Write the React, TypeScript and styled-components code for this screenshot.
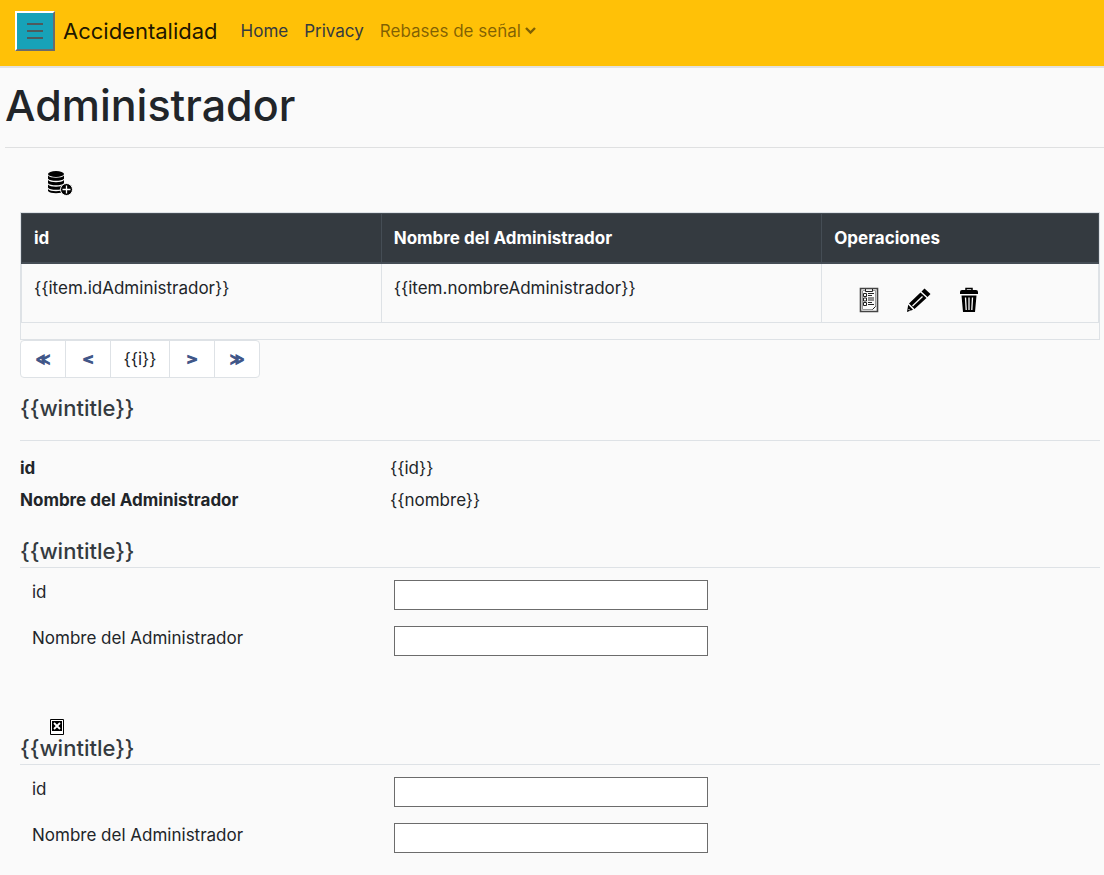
import React, { useId } from "react";
import styled, { createGlobalStyle } from "styled-components";

const GlobalStyle = createGlobalStyle`
  *, *::before, *::after { box-sizing: border-box; }
  body {
    margin: 0;
    background: #fafafa;
    color: #212529;
    font-family: Inter, "Open Sans", sans-serif;
    font-size: 17px;
    line-height: 24px;
  }
`;

const Navbar = styled.nav`
  display: flex;
  align-items: center;
  height: 68px;
  padding: 0 15px 4px;
  background: #ffc107;
  border-bottom: 2px solid #e3e2e0;
`;

const MenuButton = styled.button`
  display: grid;
  place-items: center;
  width: 40px;
  height: 40px;
  padding: 0;
  background: #17a2b8;
  border: 2px solid;
  border-color: #fff #6b6b6b #6b6b6b #fff;
`;

const Brand = styled.a`
  margin: 0 15px 0 8px;
  color: rgba(0, 0, 0, 0.9);
  font-size: 22px;
  line-height: 30px;
  text-decoration: none;
`;

const NavLink = styled.a<{ $muted?: boolean }>`
  display: flex;
  align-items: center;
  gap: 4px;
  padding: 8px;
  color: ${(p) => (p.$muted ? "rgba(0, 0, 0, 0.5)" : "#343a40")};
  text-decoration: none;
`;

const PageTitle = styled.h1`
  margin: 0 0 0 5px;
  padding: 13px 0 18px;
  border-bottom: 1px solid #dfe0e1;
  font-size: 43px;
  font-weight: 500;
  line-height: 48px;
`;

const Content = styled.main`
  padding: 19px 4px 20px 20px;
`;

const IconButton = styled.button`
  display: grid;
  place-items: center;
  width: 26px;
  height: 26px;
  padding: 0;
  background: none;
  border: 0;
  color: #000;
`;

const Toolbar = styled.div`
  display: flex;
  height: 45px;
  padding: 3px 27px;
`;

const TableFrame = styled.div`
  padding-bottom: 16px;
  border: 1px solid #dee2e6;
`;

const Table = styled.table`
  width: 100%;
  table-layout: fixed;
  border-collapse: collapse;
`;

const Column = styled.col<{ $width: string }>`
  width: ${(p) => p.$width};
`;

const HeadCell = styled.th`
  padding: 12px;
  background: #343a40;
  border: 1px solid #454d55;
  border-bottom-width: 2px;
  color: #fff;
  font-weight: 700;
  text-align: left;
`;

const Cell = styled.td`
  padding: 12px 12px 9px;
  border: 1px solid #dee2e6;
  vertical-align: top;
`;

const Actions = styled.div`
  display: flex;
  gap: 24px;
  padding: 11px 0 0 22px;
`;

const Pagination = styled.div`
  display: flex;
  width: fit-content;
  overflow: hidden;
  background: #fff;
  border: 1px solid #dee2e6;
  border-radius: 4px;
`;

const PageButton = styled.button<{ $number?: boolean }>`
  width: ${(p) => (p.$number ? 59 : 45)}px;
  height: 36px;
  padding: 0;
  background: none;
  border: 0;
  color: ${(p) => (p.$number ? "#212529" : "#3f5688")};
  font: ${(p) => (p.$number ? "400 17px Inter, sans-serif" : '700 14px "DejaVu Sans", sans-serif')};
  -webkit-text-stroke: ${(p) => (p.$number ? 0 : "1px")};
  & + & { border-left: 1px solid #dee2e6; }
  &:first-child { width: 44px; }
`;

const PanelTitle = styled.h5<{ $spacious?: boolean }>`
  margin: 0;
  padding: ${(p) => (p.$spacious ? "15px 0 17px" : "0 0 1px")};
  border-bottom: 1px solid #dee2e6;
  color: #343a40;
  font-size: 22px;
  font-weight: 500;
  line-height: 30px;
`;

const Details = styled.dl`
  display: grid;
  grid-template-columns: 370fr 710fr;
  row-gap: 8px;
  margin: 0;
  padding: 15px 0 24px;
`;

const Term = styled.dt`
  font-weight: 700;
`;

const Description = styled.dd`
  margin: 0;
`;

const Form = styled.form`
  display: grid;
  gap: 16px;
  padding: 12px 12px 0;
`;

const Field = styled.div`
  display: grid;
  grid-template-columns: 362fr 694fr;
  align-items: start;
`;

const Input = styled.input`
  width: 314px;
  max-width: 100%;
  height: 30px;
  padding: 1px 2px;
  background: #fff;
  border: 1px solid #6c6c6c;
  font: inherit;
`;

const CloseRow = styled.div`
  display: flex;
  height: 77px;
  padding: 63px 0 0 30px;
`;

const CloseButton = styled.button`
  display: block;
  width: 14px;
  height: 16px;
  padding: 0;
  background: none;
  border: 0;
  line-height: 0;
`;

const DatabaseAddIcon = () => (
  <svg width="26" height="26" viewBox="0 0 26 26" aria-hidden="true">
    <ellipse cx="9" cy="4" rx="8" ry="3" />
    <path d="M1 5.500c2 3 14 3 16 0v3.200c-2 2.800-14 2.800-16 0zM1 10c2 3 14 3 16 0v3.200c-2 2.800-14 2.800-16 0zM1 14.500c2 3 14 3 16 0v3.200c-2 2.800-14 2.800-16 0zM1 19c2 3 14 3 16 0v2c-2 3-14 3-16 0z" />
    <circle cx="19.500" cy="19.500" r="6" stroke="#fafafa" />
    <path d="M19.500 15.500v8M15.500 19.500h8" stroke="#fff" strokeWidth="1.300" />
  </svg>
);

const ClipboardIcon = () => (
  <svg width="20" height="26" viewBox="0 0 20 26" fill="none" stroke="#222" aria-hidden="true">
    <path d="M1.500 1.500h17v23h-17z" stroke="#444" strokeWidth="1.600" />
    <path d="M4 3.500h2M14 3.500h2.500v16l-3 3H3.500v-19" stroke="#999" />
    <path d="M6.500 2v2.500h7V2" />
    <path d="M4.500 6.500h3v3h-3zM4.500 11h3v3h-3zM4.500 15.500h3v3h-3zM9 6.500h6M9 8.500h4M9 11h6M9 13h6M9 15.500h4M9 17.500h6M13.500 22.500l3-3" />
  </svg>
);

const PencilIcon = () => (
  <svg width="26" height="26" viewBox="0 0 26 26" aria-hidden="true">
    <path d="M18.500 1.500l6 5.500-3 3-6-5.500zM14.500 5.500l6 5.500L8.500 22l-5.500-5.500zM2.200 17.700l4.800 5-6 2.300z" />
    <path d="M16.500 9.500L6.500 19" stroke="#fafafa" strokeWidth="1.300" />
    <path d="M2.500 22l1.500 1.500" stroke="#fafafa" />
  </svg>
);

const TrashIcon = () => (
  <svg width="20" height="26" viewBox="0 0 20 26" aria-hidden="true">
    <path d="M7 3V1.500h6V3" fill="none" stroke="#000" strokeWidth="1.500" />
    <path d="M1 7V5q0-2 2-2h14q2 0 2 2v2zM2.500 8.500h15L16 25H4z" />
    <path d="M6.500 10.500l.7 12.500M10 10.500V23M13.500 10.500l-.7 12.500" fill="none" stroke="#fafafa" strokeWidth="1.300" />
  </svg>
);

const CloseIcon = () => (
  <svg width="14" height="16" viewBox="0 0 14 16" aria-hidden="true">
    <path d="M.5.5h13v15H.5z" fill="#fff" stroke="#000" />
    <path d="M2 2h10v10H2z" />
    <path d="M4 4l6 6M10 4l-6 6" stroke="#fff" strokeWidth="1.800" />
  </svg>
);

function AdminForm() {
  const id = useId();
  return (
    <Form>
      <Field>
        <label htmlFor={`${id}-id`}>id</label>
        <Input id={`${id}-id`} type="text" />
      </Field>
      <Field>
        <label htmlFor={`${id}-nombre`}>Nombre del Administrador</label>
        <Input id={`${id}-nombre`} type="text" />
      </Field>
    </Form>
  );
}

export default function App() {
  return (
    <>
      <GlobalStyle />
      <Navbar>
        <MenuButton type="button" aria-label="Menú">
          <svg width="16" height="16" viewBox="0 0 16 16" fill="#4f5a5c" aria-hidden="true">
            <path d="M0 0h16v2H0zM0 7h16v2H0zM0 14h16v2H0z" />
          </svg>
        </MenuButton>
        <Brand href="#">Accidentalidad</Brand>
        <NavLink href="#">Home</NavLink>
        <NavLink href="#">Privacy</NavLink>
        <NavLink href="#" $muted>
          Rebases de señal
          <svg width="11" height="8" viewBox="0 0 11 8" fill="none" stroke="currentColor" strokeWidth="2.400" aria-hidden="true">
            <path d="M1 1l4.500 4.500L10 1" />
          </svg>
        </NavLink>
      </Navbar>
      <PageTitle>Administrador</PageTitle>
      <Content>
        <Toolbar>
          <IconButton type="button" aria-label="Agregar"><DatabaseAddIcon /></IconButton>
        </Toolbar>
        <TableFrame>
          <Table>
            <colgroup>
              <Column $width="33.4%" />
              <Column $width="40.9%" />
              <Column $width="25.7%" />
            </colgroup>
            <thead>
              <tr>
                <HeadCell>id</HeadCell>
                <HeadCell>Nombre del Administrador</HeadCell>
                <HeadCell>Operaciones</HeadCell>
              </tr>
            </thead>
            <tbody>
              <tr>
                <Cell>{"{{item.idAdministrador}}"}</Cell>
                <Cell>{"{{item.nombreAdministrador}}"}</Cell>
                <Cell>
                  <Actions>
                    <IconButton type="button" aria-label="Detalles"><ClipboardIcon /></IconButton>
                    <IconButton type="button" aria-label="Editar"><PencilIcon /></IconButton>
                    <IconButton type="button" aria-label="Eliminar"><TrashIcon /></IconButton>
                  </Actions>
                </Cell>
              </tr>
            </tbody>
          </Table>
        </TableFrame>
        <Pagination>
          <PageButton type="button">≪</PageButton>
          <PageButton type="button">&lt;</PageButton>
          <PageButton type="button" $number>{"{{i}}"}</PageButton>
          <PageButton type="button">&gt;</PageButton>
          <PageButton type="button">≫</PageButton>
        </Pagination>
        <PanelTitle $spacious>{"{{wintitle}}"}</PanelTitle>
        <Details>
          <Term>id</Term>
          <Description>{"{{id}}"}</Description>
          <Term>Nombre del Administrador</Term>
          <Description>{"{{nombre}}"}</Description>
        </Details>
        <PanelTitle>{"{{wintitle}}"}</PanelTitle>
        <AdminForm />
        <CloseRow>
          <CloseButton type="button" aria-label="Cerrar"><CloseIcon /></CloseButton>
        </CloseRow>
        <PanelTitle>{"{{wintitle}}"}</PanelTitle>
        <AdminForm />
      </Content>
    </>
  );
}
